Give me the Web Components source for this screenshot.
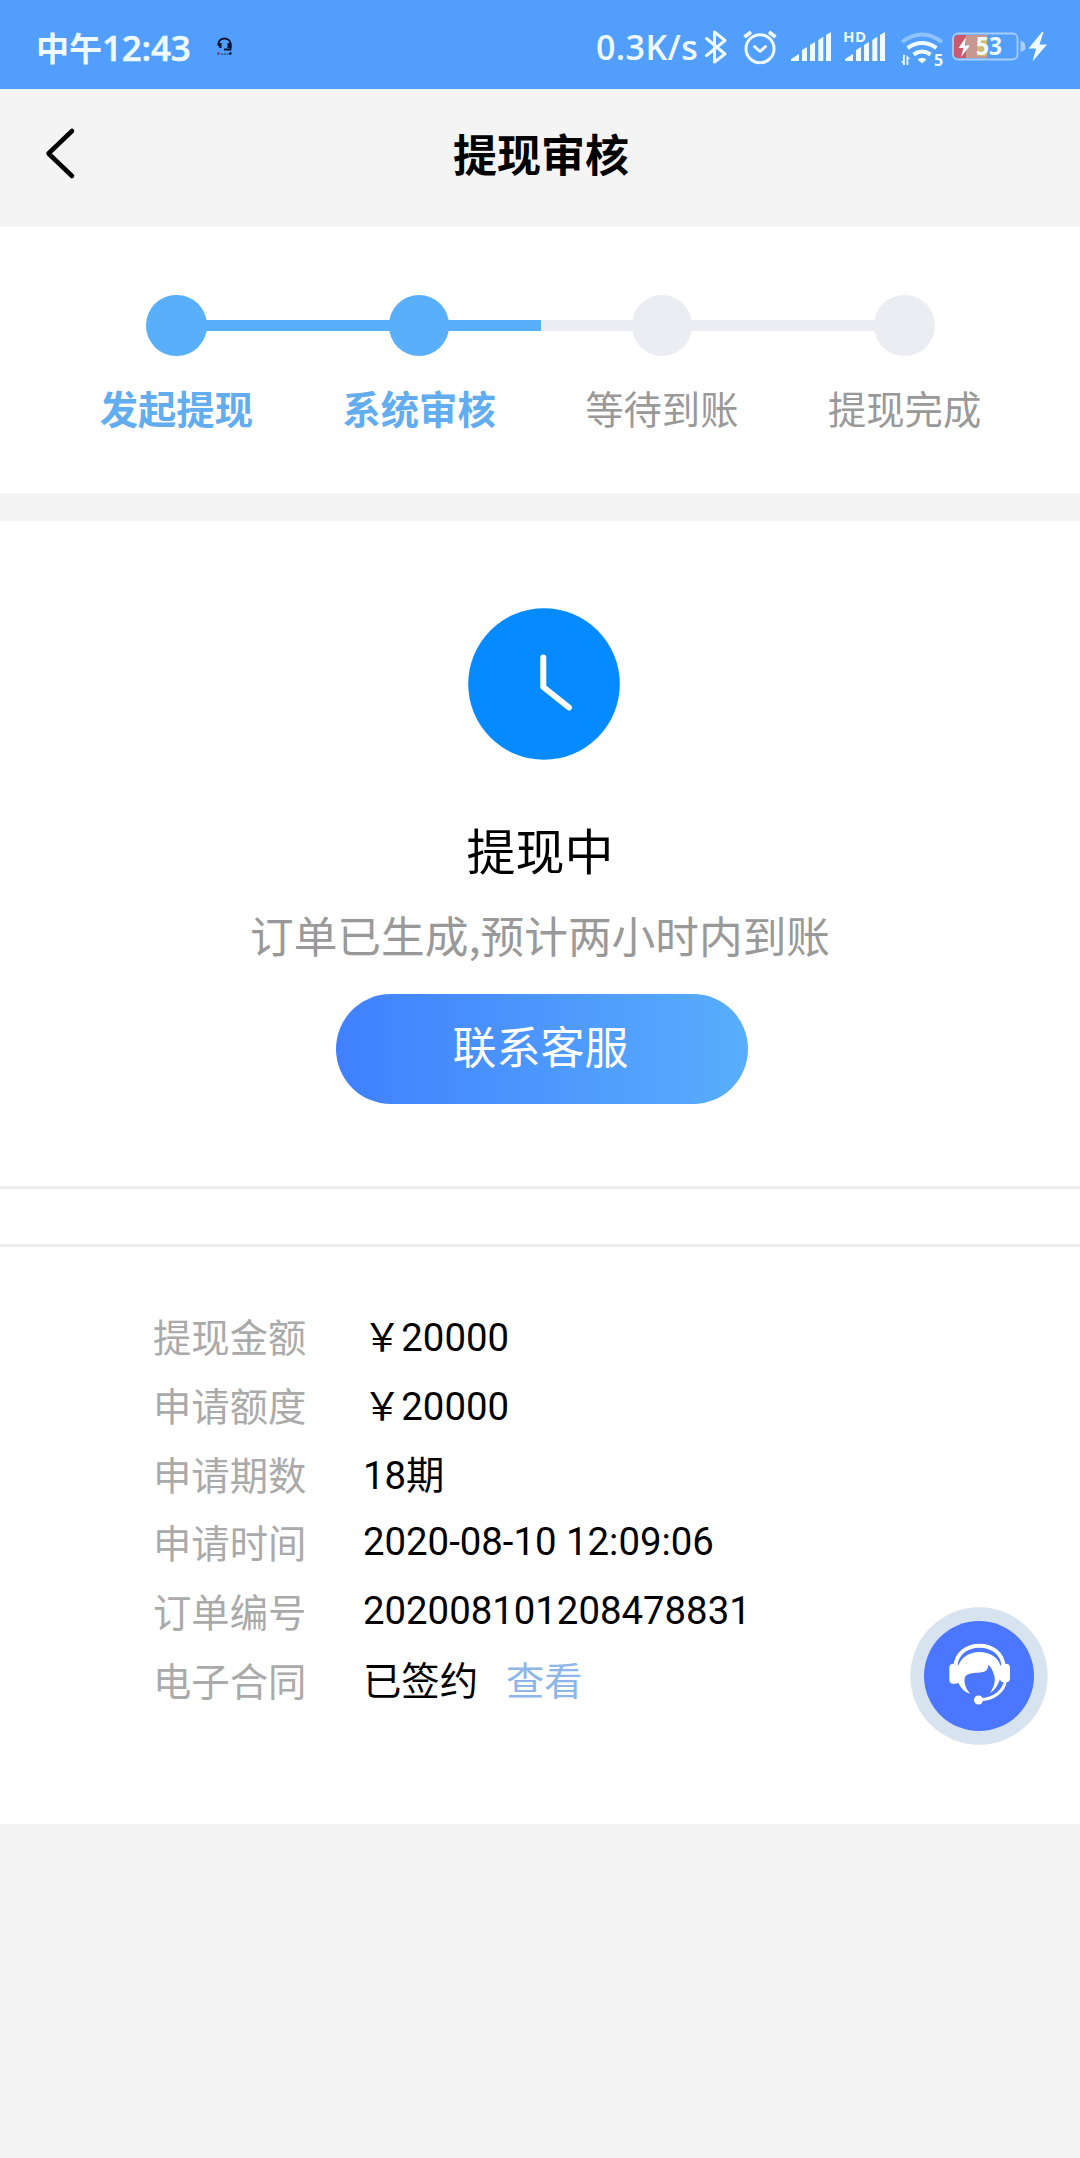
<!DOCTYPE html>
<html lang="zh-CN">
<head>
<meta charset="UTF-8">
<title>提现审核</title>
<style>
  html, body { margin: 0; padding: 0; }
  body {
    --blue: #5aaffb;
    --grey: #f4f4f4;
    --idle: #ecedf3;
    min-height: 2158px;
    background: var(--grey);
    color: #000;
    font-family: Roboto, "Noto Sans CJK SC", sans-serif;
  }
</style>
</head>
<body>
<withdraw-app></withdraw-app>

<script>
function define(name, html, setup) {
  const template = document.createElement('template');
  template.innerHTML = '<style>:host, * { box-sizing: border-box; }</style>' + html;
  customElements.define(name, class extends HTMLElement {
    constructor() {
      super();
      this.attachShadow({ mode: 'open' });
      this.shadowRoot.appendChild(template.content.cloneNode(true));
    }
    connectedCallback() {
      if (setup) setup(this, this.shadowRoot);
    }
  });
}

const bars = `
  <path d="M6 61V59L14 54V61Z"/>
  <path d="M17 61V50L22 47V61Z"/>
  <path d="M25 61V45L30 42V61Z"/>
  <path d="M33.3 61V40L38.3 36.7V61Z"/>
  <path d="M41 61V35L46 32V61Z"/>`;

define('status-bar', `
  <style>
    :host {
      display: flex;
      align-items: center;
      height: 89px;
      padding: 5px 30px 0 36px;
      background: #519efd;
      color: #eefaff;
      font-family: "Open Sans", "Noto Sans CJK SC", sans-serif;
      font-size: 35px;
      font-weight: 600;
      line-height: 1;
    }
    .time { display: flex; align-items: center; width: 176px; white-space: nowrap; }
    .time b { font: 700 33px/1 "Noto Sans CJK SC", sans-serif; }
    .time span { font-size: 35px; letter-spacing: -0.2px; -webkit-text-stroke: 0.5px #eefaff; }
    .speed { margin-left: auto; width: 104px; font-size: 34px; letter-spacing: 0.4px; white-space: nowrap; }
    svg { display: block; height: 89px; margin-top: -5px; fill: #eefaff; flex: none; }
    .line { fill: none; stroke: #eefaff; stroke-width: 3; stroke-linecap: round; stroke-linejoin: round; }
  </style>
  <div class="time"><b>中午</b><span>12:43</span></div>
  <svg width="30" viewBox="0 0 30 89">
    <path d="M6.5 46V43.5a6 5 0 0 1 12 0V49.5H12" fill="none" stroke="#081430" stroke-width="1.8"/>
    <path d="M5.5 43h4v5h-2zM15.500 43h4v5h-4z" fill="#081430"/>
    <circle cx="6.500" cy="53.500" r="1.500" fill="#7e467e"/>
    <path d="M9 54.200h9" stroke="#1b3768" stroke-dasharray="2 .8"/>
    <circle cx="18.300" cy="53.500" r="1.400" fill="#10254d"/>
  </svg>
  <div class="speed">0.3K/s</div>
  <svg width="35" viewBox="0 0 35 89">
    <path class="line" d="M6.500 38.500L25 54L14.500 62V32L25 40.500L6.500 55.500"/>
  </svg>
  <svg width="50" viewBox="0 0 50 89">
    <circle class="line" cx="25" cy="48.700" r="14"/>
    <path class="line" d="M19.500 46.500L25 51.500L30.500 46.500"/>
    <path class="line" d="M9.500 37L16 32M34 32L40.500 37" style="stroke-width:4;stroke-linecap:butt"/>
  </svg>
  <svg width="53" viewBox="0 0 53 89">${bars}</svg>
  <svg width="55" viewBox="-1 0 55 89">${bars}
    <text x="4" y="42" font-size="15" font-weight="700" textLength="23">HD</text>
  </svg>
  <svg width="57" viewBox="1 0 57 89">
    <g class="line" style="stroke-width:4;stroke-linecap:butt">
      <path d="M10 42Q30 27 50 42" opacity=".4"/>
      <path d="M15.500 48Q30 38 44.500 48"/>
      <path d="M21.500 54.500Q30 48.500 38.500 54.500"/>
    </g>
    <path d="M25.500 59.500Q30 56 34.500 59.500L30 63.500Z"/>
    <path d="M11 55V65H12.800V54.500ZM9 61L12 65V61ZM14.500 55V65H16.300V59H18Z"/>
    <text x="42" y="66" font-size="16" font-weight="700">5</text>
  </svg>
  <svg width="100" viewBox="0 0 100 89">
    <path d="M8 35H16V58H8Q4 58 4 54V39Q4 35 8 35Z" fill="#c9596d"/>
    <path d="M16 35H37V58H16Z" fill="#c7988f"/>
    <path d="M27 37H37V56H27Z" fill="#cdbb6a"/>
    <rect x="3" y="33.500" width="64.500" height="26" rx="5" fill="none" stroke="#a9ccfa" stroke-width="1.800"/>
    <path d="M70.500 40.500Q75.500 42 75.500 46.500T70.500 52Z" fill="#a9ccfa"/>
    <path d="M16 37L8.500 48H13.500L11 57L20 45.500H15Z"/>
    <text x="26" y="55" font-size="25" font-weight="700" textLength="26" lengthAdjust="spacingAndGlyphs">53</text>
    <path d="M92 32L78.500 48.500H86L82.500 61.500L97 44.500H89.500L93.500 32Z"/>
  </svg>
`);

define('nav-bar', `
  <style>
    :host {
      display: grid;
      grid-template-columns: 120px 1fr 120px;
      align-items: center;
      height: 138px;
      background: var(--grey);
      padding-bottom: 10px;
    }
    svg { display: block; margin: 0 0 0 40px; }
    h1 {
      margin: 0 -1px 0 1px;
      font: 700 44px/64px "Noto Sans CJK SC", sans-serif;
      text-align: center;
    }
  </style>
  <svg width="40" height="56" viewBox="0 0 40 56" fill="none" stroke="#000" stroke-width="4.500" stroke-linecap="round" stroke-linejoin="round">
    <path d="M32 6L8.500 28.500L32 51"/>
  </svg>
  <h1><slot></slot></h1>
`);

define('step-item', `
  <style>
    :host {
      flex: 1;
      display: flex;
      flex-direction: column;
      align-items: center;
      color: #999;
      --left: var(--idle);
      --right: var(--idle);
    }
    :host([done]) { color: #62acf0; font-weight: 700; --left: var(--blue); --right: var(--blue); }
    .track { display: flex; align-items: center; align-self: stretch; height: 61px; }
    .track i { flex: 1; height: 11px; background: var(--left); }
    .track i:last-child { background: var(--right); }
    .dot { width: 60.500px; height: 60.500px; border-radius: 50%; background: var(--left); margin: 0 -1px; }
    :host(:first-of-type) i:first-child, :host(:last-of-type) i:last-child { background: none; }
    .label { margin-top: 24px; font-size: 38.300px; line-height: 56px; white-space: nowrap; }
  </style>
  <div class="track"><i></i><div class="dot"></div><i></i></div>
  <div class="label"><slot></slot></div>
`);

define('step-bar', `
  <style>
    :host {
      display: flex;
      height: 266px;
      padding: 68px 54px 0 55px;
      background: #fff;
      font-family: "Noto Sans CJK SC", sans-serif;
    }
  </style>
  <slot></slot>
`);

define('pill-button', `
  <style>
    :host { display: block; }
    button {
      display: block;
      width: 412px;
      height: 110px;
      padding: 0 3px 8px 0;
      border: 0;
      border-radius: 55px;
      background: linear-gradient(90deg, #4080ff, #58aefc);
      color: #fff;
      font: 400 44px/64px "Noto Sans CJK SC", sans-serif;
    }
  </style>
  <button><slot></slot></button>
`);

define('withdraw-status', `
  <style>
    :host {
      display: flex;
      flex-direction: column;
      align-items: center;
      height: 665px;
      padding-top: 87px;
      background: #fff;
      font-family: "Noto Sans CJK SC", sans-serif;
    }
    svg { display: block; flex: none; margin-left: 8px; }
    .title { margin-top: 53px; font-size: 49px; line-height: 72px; }
    .hint { margin-top: 17px; font-size: 43.700px; line-height: 64px; color: #999; white-space: nowrap; }
    ::slotted(pill-button) { margin: 28px 0 0 4px; }
  </style>
  <svg width="152" height="152" viewBox="0 0 152 152">
    <circle cx="76" cy="76" r="75.800" fill="#058bff"/>
    <path d="M75.300 49.500V79L101 99.500" fill="none" stroke="#fff" stroke-width="6" stroke-linecap="round" stroke-linejoin="round"/>
  </svg>
  <div class="title"></div>
  <div class="hint"></div>
  <slot></slot>
`, (el, root) => {
  root.querySelector('.title').textContent = el.getAttribute('heading');
  root.querySelector('.hint').textContent = el.getAttribute('hint');
});

define('info-row', `
  <style>
    :host { display: flex; height: 68.800px; font-size: 38.350px; line-height: 56px; white-space: nowrap; }
    .label { width: 210px; color: #aaa; font-family: "Noto Sans CJK SC", sans-serif; }
    .value { margin-top: 2px; }
    :host([latin]) .value { margin-top: 0; }
    ::slotted(a) { margin-left: 28px; color: #8fb6e8; text-decoration: none; }
  </style>
  <div class="label"></div>
  <div class="value"><slot></slot></div>
`, (el, root) => {
  root.querySelector('.label').textContent = el.getAttribute('label');
});

define('info-list', `
  <style>
    :host {
      display: block;
      height: 638px;
      padding: 122px 0 0 153px;
      background:
        linear-gradient(#eee, #eee) 0 0 / 100% 3px no-repeat,
        linear-gradient(#eee, #eee) 0 58px / 100% 3px no-repeat,
        #fff;
    }
  </style>
  <slot></slot>
`);

define('service-button', `
  <style>
    :host { position: absolute; left: 910px; top: 1607px; width: 138px; height: 138px; }
    svg { display: block; }
  </style>
  <svg width="138" height="138" viewBox="0 0 138 138">
    <circle cx="69" cy="69" r="68.700" fill="#d7e3ee"/>
    <circle cx="69" cy="69" r="55" fill="#4b76ff"/>
    <g fill="#fff">
      <path d="M45.500 60C46 31.500 93 31.500 93.500 60" fill="none" stroke="#fff" stroke-width="4"/>
      <path d="M48 60C53 40 86 40 91 60L92 74L90 72C88 78 85 83 80 86C84 80 86 74 84 68C83 64 81 60 78.500 57.700C77.500 63 76 65 70 65.500C60 66 54.500 67 54.500 73C54.500 79 57 83 60.500 87C54 85 50 80 48 75Z"/>
      <rect x="39.300" y="56.700" width="10" height="20" rx="4"/>
      <rect x="90" y="56.700" width="10" height="18.500" rx="4"/>
      <path d="M95.500 73C94 85 83 92.500 70 92.500" fill="none" stroke="#fff" stroke-width="3"/>
      <circle cx="68.500" cy="93" r="4.500"/>
    </g>
  </svg>
`);

define('withdraw-app', `
  <style>
    :host { display: block; position: relative; width: 1080px; height: 2158px; overflow: hidden; }
    step-bar { margin-bottom: 28px; }
  </style>
  <status-bar></status-bar>
  <nav-bar>提现审核</nav-bar>
  <step-bar>
    <step-item done>发起提现</step-item>
    <step-item done>系统审核</step-item>
    <step-item>等待到账</step-item>
    <step-item>提现完成</step-item>
  </step-bar>
  <withdraw-status heading="提现中" hint="订单已生成,预计两小时内到账">
    <pill-button>联系客服</pill-button>
  </withdraw-status>
  <info-list>
    <info-row label="提现金额">&#xFFE5;20000</info-row>
    <info-row label="申请额度">&#xFFE5;20000</info-row>
    <info-row label="申请期数">18期</info-row>
    <info-row label="申请时间" latin>2020-08-10 12:09:06</info-row>
    <info-row label="订单编号" latin>202008101208478831</info-row>
    <info-row label="电子合同">已签约<a>查看</a></info-row>
  </info-list>
  <service-button></service-button>
`);
</script>
</body>
</html>
